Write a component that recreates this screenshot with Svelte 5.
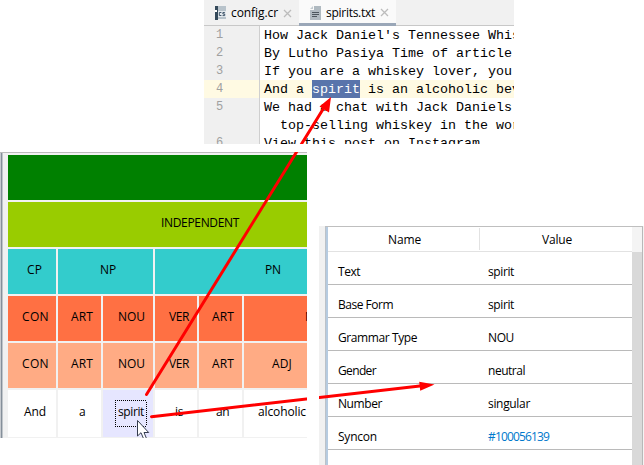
<script>
  const code = [
    ['1', "How Jack Daniel's Tennessee Whis"],
    ['2', 'By Lutho Pasiya Time of article'],
    ['3', 'If you are a whiskey lover, you'],
    ['4', 'And a ', 'spirit', ' is an alcoholic bev'],
    ['5', 'We had a chat with Jack Daniels'],
    ['', '  top-selling whiskey in the wor'],
    ['6', 'View this post on Instagram'],
  ];

  // cell: [width, label, label offset, label width]
  const tree = [
    { color: '#008000', cells: [[299, '', 0, 0]] },
    { color: '#99cc00', cells: [[299, 'INDEPENDENT', 153, 78]] },
    { color: '#33cccc', cells: [[48, 'CP', 19, 15], [95, 'NP', 42, 16], [152, 'PN', 110, 16]] },
    { color: '#ff7043', cells: [[48, 'CON', 14, 27], [43, 'ART', 13, 22], [50, 'NOU', 15, 27], [42, 'VER', 14, 20], [43, 'ART', 13, 22], [63, 'NOU', 61, 27]] },
    { color: '#ffab84', cells: [[48, 'CON', 14, 27], [43, 'ART', 13, 22], [50, 'NOU', 15, 27], [42, 'VER', 14, 20], [43, 'ART', 13, 22], [63, 'ADJ', 28, 20]] },
    { color: '#ffffff', cells: [[48, 'And', 16, 22], [43, 'a', 21, 6], [50, 'spirit', 15, 26, true], [42, 'is', 20, 8], [43, 'an', 17, 13], [63, 'alcoholic', 14, 48]] },
  ];

  const props = [
    ['Text', 22, 'spirit', 26],
    ['Base Form', 55, 'spirit', 26],
    ['Grammar Type', 79, 'NOU', 26],
    ['Gender', 38, 'neutral', 37],
    ['Number', 44, 'singular', 42],
    ['Syncon', 39, '#100056139', 61],
  ];

  function fit(node, width) {
    const n = node.textContent.length;
    if (!n) return;
    const natural = node.getBoundingClientRect().width;
    node.style.letterSpacing = (width - natural) / n + 'px';
  }
</script>

<main>
  <section class="editor">
    <header class="tabs">
      <div class="tab">
        <svg width="12" height="14" viewBox="0 0 12 14">
          <path d="M3 0h8v13H3z" fill="#b8c3cb" />
          <path d="M0 0h3v14H0z" fill="#34495a" />
          <path d="M0 4h2v2H0z" fill="#fff" />
          <path d="M3 5h8v6H3z" fill="#e4e9ed" />
          <path d="M6.4 6.5H4.3v3h2.1M9.8 6.5H7.9V8h1.8v1.6H7.6" fill="none" stroke="#40566a" />
        </svg>
        <span use:fit={47}>config.cr</span>
        <svg class="close" width="9" height="9" viewBox="0 0 9 9"><path d="M1 1l7 7M8 1L1 8" /></svg>
      </div>
      <div class="tab active">
        <svg width="11" height="14" viewBox="0 0 11 14">
          <path d="M4 0h7v14H0V4h4z" fill="#b0bac1" />
          <path d="M0 3l3-3v3z" fill="#c3cbd0" />
          <path d="M2 6.5h7M2 8.5h7M2 10.5h5" stroke="#4c565e" />
        </svg>
        <span use:fit={49}>spirits.txt</span>
        <svg class="close" width="9" height="9" viewBox="0 0 9 9"><path d="M1 1l7 7M8 1L1 8" /></svg>
      </div>
    </header>
    {#each code as [num, text, mark, rest]}
      <div class="line" class:current={mark}>
        <b>{num}</b>
        <code>{text}{#if mark}<mark>{mark}</mark>{rest}{/if}</code>
      </div>
    {/each}
  </section>

  <div class="lower">
    <section class="tree">
      {#each tree as row}
        <div class="row">
          {#each row.cells as [w, label, pad, lw, selected]}
            <div class="cell" class:selected style="width:{w}px;padding-left:{pad}px;background-color:{selected ? '#e6e6ff' : row.color}">
              <span use:fit={lw}>{label}</span>
            </div>
          {/each}
        </div>
      {/each}
    </section>

    <section class="props">
      <div class="table">
        <div class="head">
          <div class="name"><span use:fit={33}>Name</span></div>
          <div class="value"><span use:fit={30}>Value</span></div>
        </div>
        {#each props as [name, nw, value, vw]}
          <div class="prop">
            <div class="name"><span use:fit={nw}>{name}</span></div>
            <div class="value" class:link={value[0] === '#'}><span use:fit={vw}>{value}</span></div>
          </div>
        {/each}
      </div>
      <div class="scroll"><i></i></div>
    </section>
  </div>

  <svg class="arrows" width="644" height="465" viewBox="0 0 644 465">
    <defs>
      <clipPath id="panels"><path d="M204 0h310v144H204zM0 152h307v286H0zM319 226h325v239H319z" /></clipPath>
    </defs>
    <g clip-path="url(#panels)">
      <path d="M146.500 394.500L325 106M151.500 416.700L422 385.800" stroke="#f00" stroke-width="3" stroke-linecap="round" />
      <path d="M331 97l-11.500 9.500 9.500 6zM434.500 384.500l-15.300-2.700 1 9z" fill="#f00" />
      <path d="M115 400.500h32M115 426.500h32M115.500 402v24M146.500 402v24" fill="none" stroke="#000" stroke-dasharray="1 1" shape-rendering="crispEdges" />
      <path d="M137.500 420.500v15.500l3.500-3.300 3 7h3l-3-7.200h4.700z" fill="#fff" stroke="#333b4d" />
    </g>
  </svg>
</main>

<style>
  :global(body) { background: #fff; }
  main {
    position: relative;
    width: 644px;
    height: 465px;
    overflow: hidden;
    background: #fff;
    color: #000;
    font: 12px/16px "Open Sans", "Noto Sans", sans-serif;
    white-space: nowrap;
  }
  span { display: inline-block; }

  .editor { width: 310px; height: 144px; margin-left: 204px; overflow: hidden; }
  .tabs { display: flex; height: 26px; box-sizing: border-box; background: #f1f1f1; border-bottom: 1px solid #c8c8c8; }
  .tab { display: flex; align-items: center; box-sizing: border-box; width: 95px; height: 26px; padding: 0 0 0 11px; }
  .tab span { margin-left: 4px; }
  .tab .close { margin-left: 5px; }
  .active { width: 97px; padding-left: 11px; background: #fafafa; border-bottom: 3px solid #9aa7b8; padding-top: 2px; }
  .active span { margin-left: 5px; }
  .close { stroke: #bcbcbc; stroke-width: 1.3; fill: none; }
  .line { display: flex; height: 18px; font: 13.333px/19px "Liberation Mono", monospace; }
  .line b { box-sizing: border-box; width: 56px; padding-left: 12px; background: #f0f0f0; border-right: 1px solid #cfcfcf; color: #a0a0a0; font-weight: 400; font-size: 12px; }
  .line code { flex: 1; padding-left: 4px; font: inherit; white-space: pre; overflow: hidden; }
  .current, .current b { background: #fffae3; }
  mark { display: inline-block; height: 18px; background: #5974ab; color: #fff; }

  .lower { display: flex; gap: 12px; padding-top: 8px; align-items: flex-start; }
  .tree {
    display: flex;
    flex-direction: column;
    gap: 2px;
    box-sizing: border-box;
    width: 307px;
    height: 286px;
    padding: 2px 0 1px 8px;
    border-top: 1px solid #bcbcbc;
    background: linear-gradient(90deg, #c6cacf 1px, #858f9a 1px 2px, #c0c5ca 2px 3px, #f1f1f1 3px);
    overflow: hidden;
  }
  .row { display: flex; gap: 2px; height: 45px; }
  .row:last-child { height: 47px; }
  .cell { box-sizing: border-box; flex: none; padding-top: 13px; overflow: hidden; }
  .row:last-child .cell { padding-top: 14px; }

  .props { display: flex; box-sizing: border-box; width: 325px; height: 239px; margin-top: 74px; padding-left: 6px; background: linear-gradient(90deg, #f1f1f1 6px, #fff 6px); border-right: 1px solid #f4f4f4; }
  .table { box-sizing: border-box; width: 307px; border-top: 1px solid #bfbfbf; border-left: 1px solid #bcc2c8; box-shadow: inset 2px 0 #b6cbe0; }
  .head { display: flex; height: 25px; box-sizing: border-box; margin-left: 2px; border-bottom: 1px solid #e2e2e2; }
  .head .name { box-sizing: border-box; width: 152px; height: 22px; margin-top: 1px; padding: 4px 0 0 60px; border-right: 1px solid #e2e2e2; }
  .head .value { padding: 5px 0 0 62px; }
  .prop { display: flex; box-sizing: border-box; height: 33px; margin-left: 2px; padding: 12px 0 0 10px; border-bottom: 1px solid #bababa; }
  .prop .name { width: 150px; }
  .link { color: #0078cc; }
  .scroll { box-sizing: border-box; width: 11px; border-top: 1px solid #bfbfbf; border-right: 1px solid #b8b8b8; background: #f4f4f4; padding-top: 25px; }
  .scroll i { display: block; height: 213px; background: #d9d9d9; }

  .arrows { position: absolute; left: 0; top: 0; }
</style>
